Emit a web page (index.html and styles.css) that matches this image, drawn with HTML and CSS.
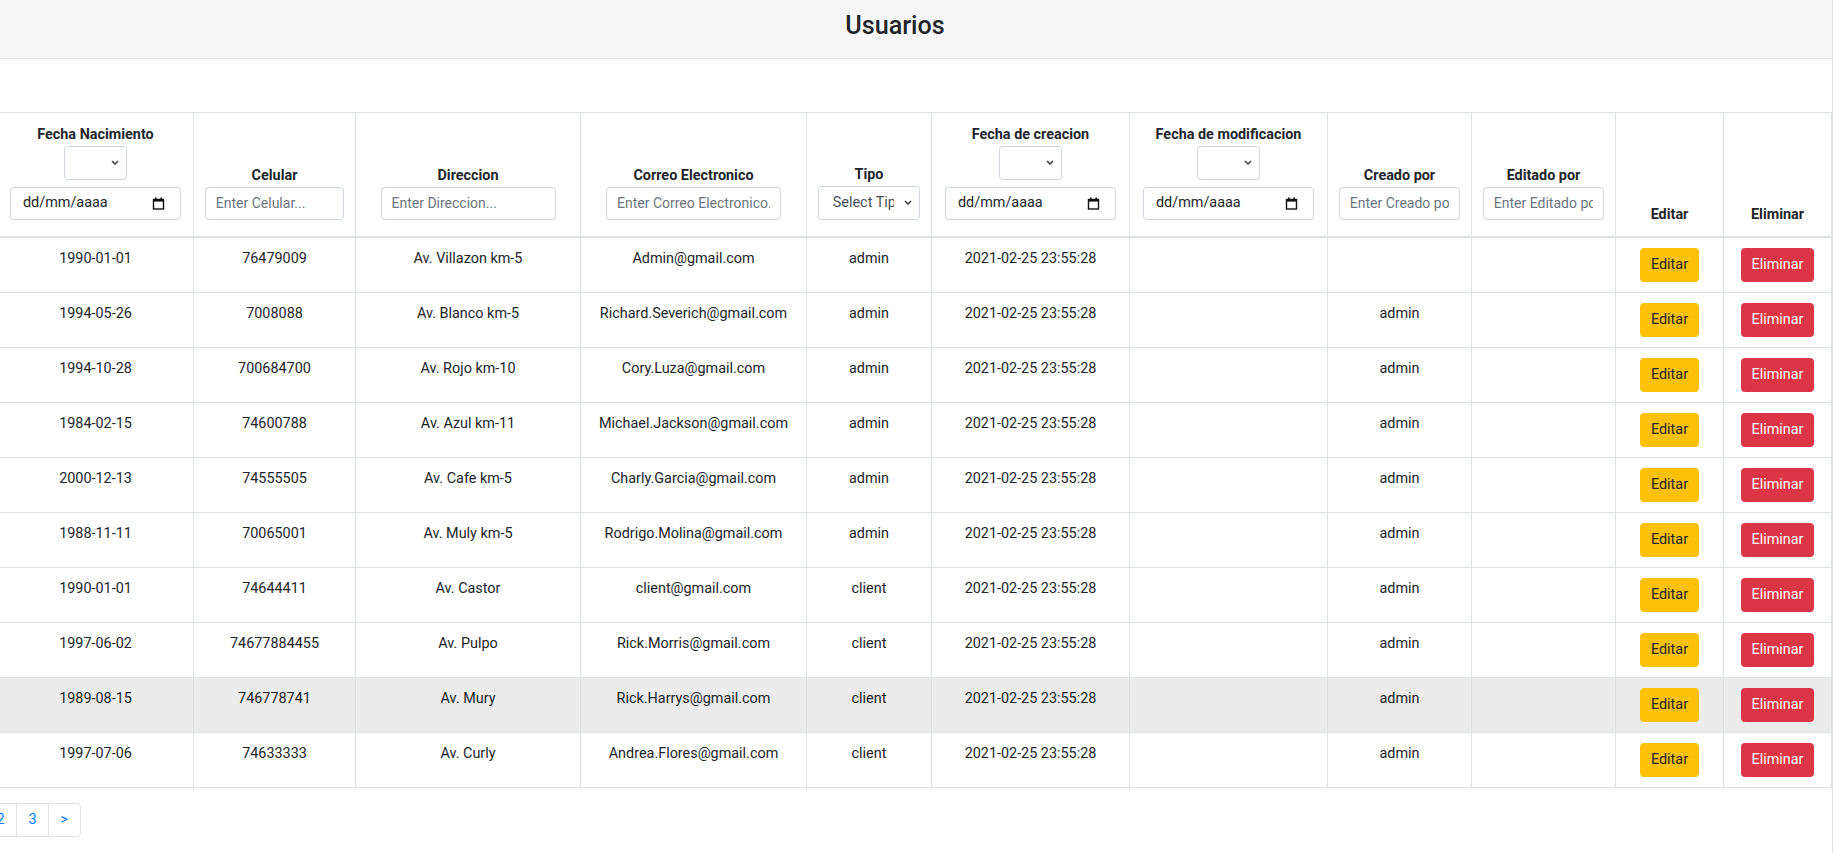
FILE: index.html
```html
<!DOCTYPE html>
<html lang="es">
<head>
<meta charset="utf-8">
<title>Usuarios</title>
<link rel="stylesheet" href="styles.css">
</head>
<body>
<div class="card">
  <div class="card-header"><h3 class="title">Usuarios</h3></div>
  <div class="card-body">
    <table class="grid">
      <colgroup>
        <col class="c1"><col class="c2"><col class="c3"><col class="c4"><col class="c5"><col class="c6"><col class="c7"><col class="c8"><col class="c9"><col class="c10"><col class="c11">
      </colgroup>
      <thead>
        <tr>
          <th>
            <div class="filter">
              <div class="lbl">Fecha Nacimiento</div>
              <div class="sel small"><svg class="chev" width="8" height="5" viewBox="0 0 8 5"><polyline points="1,1 4,4 7,1" fill="none" stroke="#444" stroke-width="1.6"/></svg></div>
              <div class="date"><span>dd/mm/aaaa</span><svg width="13" height="13" viewBox="0 0 13 13"><rect x="1.5" y="2.5" width="10" height="9.5" fill="none" stroke="#111" stroke-width="1.4"/><rect x="1" y="2" width="11" height="2.6" fill="#111"/><rect x="3" y="0.5" width="1.6" height="2" fill="#111"/><rect x="8.4" y="0.5" width="1.6" height="2" fill="#111"/></svg></div>
            </div>
          </th>
          <th><div class="filter"><div class="lbl">Celular</div><input class="txt" type="text" placeholder="Enter Celular..."></div></th>
          <th><div class="filter"><div class="lbl">Direccion</div><input class="txt" type="text" placeholder="Enter Direccion..."></div></th>
          <th><div class="filter"><div class="lbl">Correo Electronico</div><input class="txt" type="text" placeholder="Enter Correo Electronico..."></div></th>
          <th><div class="filter"><div class="lbl">Tipo</div><div class="sel full"><span class="seltext">Select Tipo</span><svg class="chev" width="8" height="5" viewBox="0 0 8 5"><polyline points="1,1 4,4 7,1" fill="none" stroke="#444" stroke-width="1.6"/></svg></div></div></th>
          <th>
            <div class="filter">
              <div class="lbl">Fecha de creacion</div>
              <div class="sel small"><svg class="chev" width="8" height="5" viewBox="0 0 8 5"><polyline points="1,1 4,4 7,1" fill="none" stroke="#444" stroke-width="1.6"/></svg></div>
              <div class="date"><span>dd/mm/aaaa</span><svg width="13" height="13" viewBox="0 0 13 13"><rect x="1.5" y="2.5" width="10" height="9.5" fill="none" stroke="#111" stroke-width="1.4"/><rect x="1" y="2" width="11" height="2.6" fill="#111"/><rect x="3" y="0.5" width="1.6" height="2" fill="#111"/><rect x="8.4" y="0.5" width="1.6" height="2" fill="#111"/></svg></div>
            </div>
          </th>
          <th>
            <div class="filter">
              <div class="lbl">Fecha de modificacion</div>
              <div class="sel small"><svg class="chev" width="8" height="5" viewBox="0 0 8 5"><polyline points="1,1 4,4 7,1" fill="none" stroke="#444" stroke-width="1.6"/></svg></div>
              <div class="date"><span>dd/mm/aaaa</span><svg width="13" height="13" viewBox="0 0 13 13"><rect x="1.5" y="2.5" width="10" height="9.5" fill="none" stroke="#111" stroke-width="1.4"/><rect x="1" y="2" width="11" height="2.6" fill="#111"/><rect x="3" y="0.5" width="1.6" height="2" fill="#111"/><rect x="8.4" y="0.5" width="1.6" height="2" fill="#111"/></svg></div>
            </div>
          </th>
          <th><div class="filter"><div class="lbl">Creado por</div><input class="txt" type="text" placeholder="Enter Creado por..."></div></th>
          <th><div class="filter"><div class="lbl">Editado por</div><input class="txt" type="text" placeholder="Enter Editado por..."></div></th>
          <th><div class="lbl">Editar</div></th>
          <th><div class="lbl">Eliminar</div></th>
        </tr>
      </thead>
      <tbody>
        <tr><td>1990-01-01</td><td>76479009</td><td>Av. Villazon km-5</td><td>Admin@gmail.com</td><td>admin</td><td>2021-02-25 23:55:28</td><td></td><td></td><td></td><td><button class="btn warn">Editar</button></td><td><button class="btn danger">Eliminar</button></td></tr>
        <tr><td>1994-05-26</td><td>7008088</td><td>Av. Blanco km-5</td><td>Richard.Severich@gmail.com</td><td>admin</td><td>2021-02-25 23:55:28</td><td></td><td>admin</td><td></td><td><button class="btn warn">Editar</button></td><td><button class="btn danger">Eliminar</button></td></tr>
        <tr><td>1994-10-28</td><td>700684700</td><td>Av. Rojo km-10</td><td>Cory.Luza@gmail.com</td><td>admin</td><td>2021-02-25 23:55:28</td><td></td><td>admin</td><td></td><td><button class="btn warn">Editar</button></td><td><button class="btn danger">Eliminar</button></td></tr>
        <tr><td>1984-02-15</td><td>74600788</td><td>Av. Azul km-11</td><td>Michael.Jackson@gmail.com</td><td>admin</td><td>2021-02-25 23:55:28</td><td></td><td>admin</td><td></td><td><button class="btn warn">Editar</button></td><td><button class="btn danger">Eliminar</button></td></tr>
        <tr><td>2000-12-13</td><td>74555505</td><td>Av. Cafe km-5</td><td>Charly.Garcia@gmail.com</td><td>admin</td><td>2021-02-25 23:55:28</td><td></td><td>admin</td><td></td><td><button class="btn warn">Editar</button></td><td><button class="btn danger">Eliminar</button></td></tr>
        <tr><td>1988-11-11</td><td>70065001</td><td>Av. Muly km-5</td><td>Rodrigo.Molina@gmail.com</td><td>admin</td><td>2021-02-25 23:55:28</td><td></td><td>admin</td><td></td><td><button class="btn warn">Editar</button></td><td><button class="btn danger">Eliminar</button></td></tr>
        <tr><td>1990-01-01</td><td>74644411</td><td>Av. Castor</td><td>client@gmail.com</td><td>client</td><td>2021-02-25 23:55:28</td><td></td><td>admin</td><td></td><td><button class="btn warn">Editar</button></td><td><button class="btn danger">Eliminar</button></td></tr>
        <tr><td>1997-06-02</td><td>74677884455</td><td>Av. Pulpo</td><td>Rick.Morris@gmail.com</td><td>client</td><td>2021-02-25 23:55:28</td><td></td><td>admin</td><td></td><td><button class="btn warn">Editar</button></td><td><button class="btn danger">Eliminar</button></td></tr>
        <tr class="hover"><td>1989-08-15</td><td>746778741</td><td>Av. Mury</td><td>Rick.Harrys@gmail.com</td><td>client</td><td>2021-02-25 23:55:28</td><td></td><td>admin</td><td></td><td><button class="btn warn">Editar</button></td><td><button class="btn danger">Eliminar</button></td></tr>
        <tr><td>1997-07-06</td><td>74633333</td><td>Av. Curly</td><td>Andrea.Flores@gmail.com</td><td>client</td><td>2021-02-25 23:55:28</td><td></td><td>admin</td><td></td><td><button class="btn warn">Editar</button></td><td><button class="btn danger">Eliminar</button></td></tr>
      </tbody>
    </table>
    <ul class="pager">
      <li class="pg">&lt;</li>
      <li class="pg">1</li>
      <li class="pg">2</li>
      <li class="pg">3</li>
      <li class="pg">&gt;</li>
    </ul>
  </div>
</div>
</body>
</html>
```
FILE: styles.css
```css
html, body {
  margin: 0;
  padding: 0;
  background: #fff;
  overflow: hidden;
}
body {
  font-family: Roboto, "Liberation Sans", sans-serif;
  font-size: 14.4px;
  line-height: 21.6px;
  color: #212529;
  width: 1836px;
  height: 853px;
}
.card {
  margin-left: -43px;
  width: 1876px;
  box-sizing: border-box;
  border: 1px solid #dfdfdf;
  border-top: none;
  border-bottom: none;
  height: 853px;
}
.card-header {
  background: #f7f7f7;
  border-bottom: 1px solid #dfdfdf;
  padding: 10.8px 18px 10px;
  text-align: center;
}
.title {
  margin: 0 0 7.2px;
  font-size: 25.2px;
  line-height: 30.24px;
  font-weight: 500;
  color: #212529;
}
.card-body {
  padding: 53px 0 0 39px;
}
.grid {
  border-collapse: collapse;
  table-layout: fixed;
  width: 1834px;
}
.c1 { width: 196px; }
.c2 { width: 162px; }
.c3 { width: 225px; }
.c4 { width: 226px; }
.c5 { width: 125px; }
.c6 { width: 198px; }
.c7 { width: 198px; }
.c8 { width: 144px; }
.c9 { width: 144px; }
.c10 { width: 108px; }
.c11 { width: 108px; }
.grid th, .grid td {
  border: 1px solid #dee2e6;
  text-align: center;
  padding: 10px 10.8px;
}
.grid th {
  vertical-align: bottom;
  border-bottom: 2px solid #dee2e6;
  padding: 10.8px 10.8px 11px;
  font-weight: 700;
}
.grid td {
  vertical-align: top;
  white-space: nowrap;
  height: 34px;
  box-sizing: border-box;
}
.grid tbody tr {
  height: 55px;
}
.grid tr.hover td {
  background: #ececec;
}
.filter {
  display: flex;
  flex-direction: column;
  align-items: center;
  padding-bottom: 5.5px;
}
.lbl {
  font-weight: 700;
  line-height: 21.6px;
  white-space: nowrap;
}
.sel {
  box-sizing: border-box;
  height: 34px;
  border: 1px solid #ced4da;
  border-radius: 3.6px;
  display: flex;
  align-items: center;
  justify-content: flex-end;
  padding: 0 7px;
  background: #fff;
  font-weight: 400;
}
.sel.small {
  width: 63px;
  margin-bottom: 7px;
}
.sel.full {
  width: 100%;
  justify-content: space-between;
  padding-left: 14px;
}
.seltext {
  width: 61px;
  overflow: hidden;
  white-space: nowrap;
  text-align: left;
  color: #495057;
}
.chev {
  flex: none;
}
.date {
  box-sizing: border-box;
  width: 171px;
  height: 33px;
  border: 1px solid #ced4da;
  border-radius: 3.6px;
  display: flex;
  align-items: center;
  justify-content: space-between;
  padding: 0 15px 0 12px;
  font-weight: 400;
  color: #212529;
  background: #fff;
}
.txt {
  box-sizing: border-box;
  width: 175px;
  max-width: 100%;
  height: 33px;
  border: 1px solid #ced4da;
  border-radius: 3.6px;
  padding: 0 10px;
  font-family: inherit;
  font-size: 14px;
  color: #495057;
  background: #fff;
  outline: none;
}
.txt::placeholder {
  color: #6c757d;
}
.btn {
  box-sizing: border-box;
  display: inline-block;
  vertical-align: top;
  height: 34px;
  padding: 0 9.5px;
  border: 1px solid transparent;
  border-radius: 3.6px;
  font-family: inherit;
  font-size: 14.4px;
  line-height: 32px;
  cursor: pointer;
}
.btn.warn {
  background: #ffc107;
  border-color: #ffc107;
  color: #212529;
}
.btn.danger {
  background: #dc3545;
  border-color: #dc3545;
  color: #fff;
}
.pager {
  list-style: none;
  display: flex;
  margin: 15px 0 0 -76.5px;
  padding: 0;
}
.pg {
  box-sizing: border-box;
  height: 34px;
  padding: 0 11.5px;
  line-height: 32px;
  border: 1px solid #dee2e6;
  margin-left: -1px;
  color: #007bff;
  background: #fff;
}
.pg:first-child {
  margin-left: 0;
  border-radius: 3.6px 0 0 3.6px;
}
.pg:last-child {
  border-radius: 0 3.6px 3.6px 0;
}
```
